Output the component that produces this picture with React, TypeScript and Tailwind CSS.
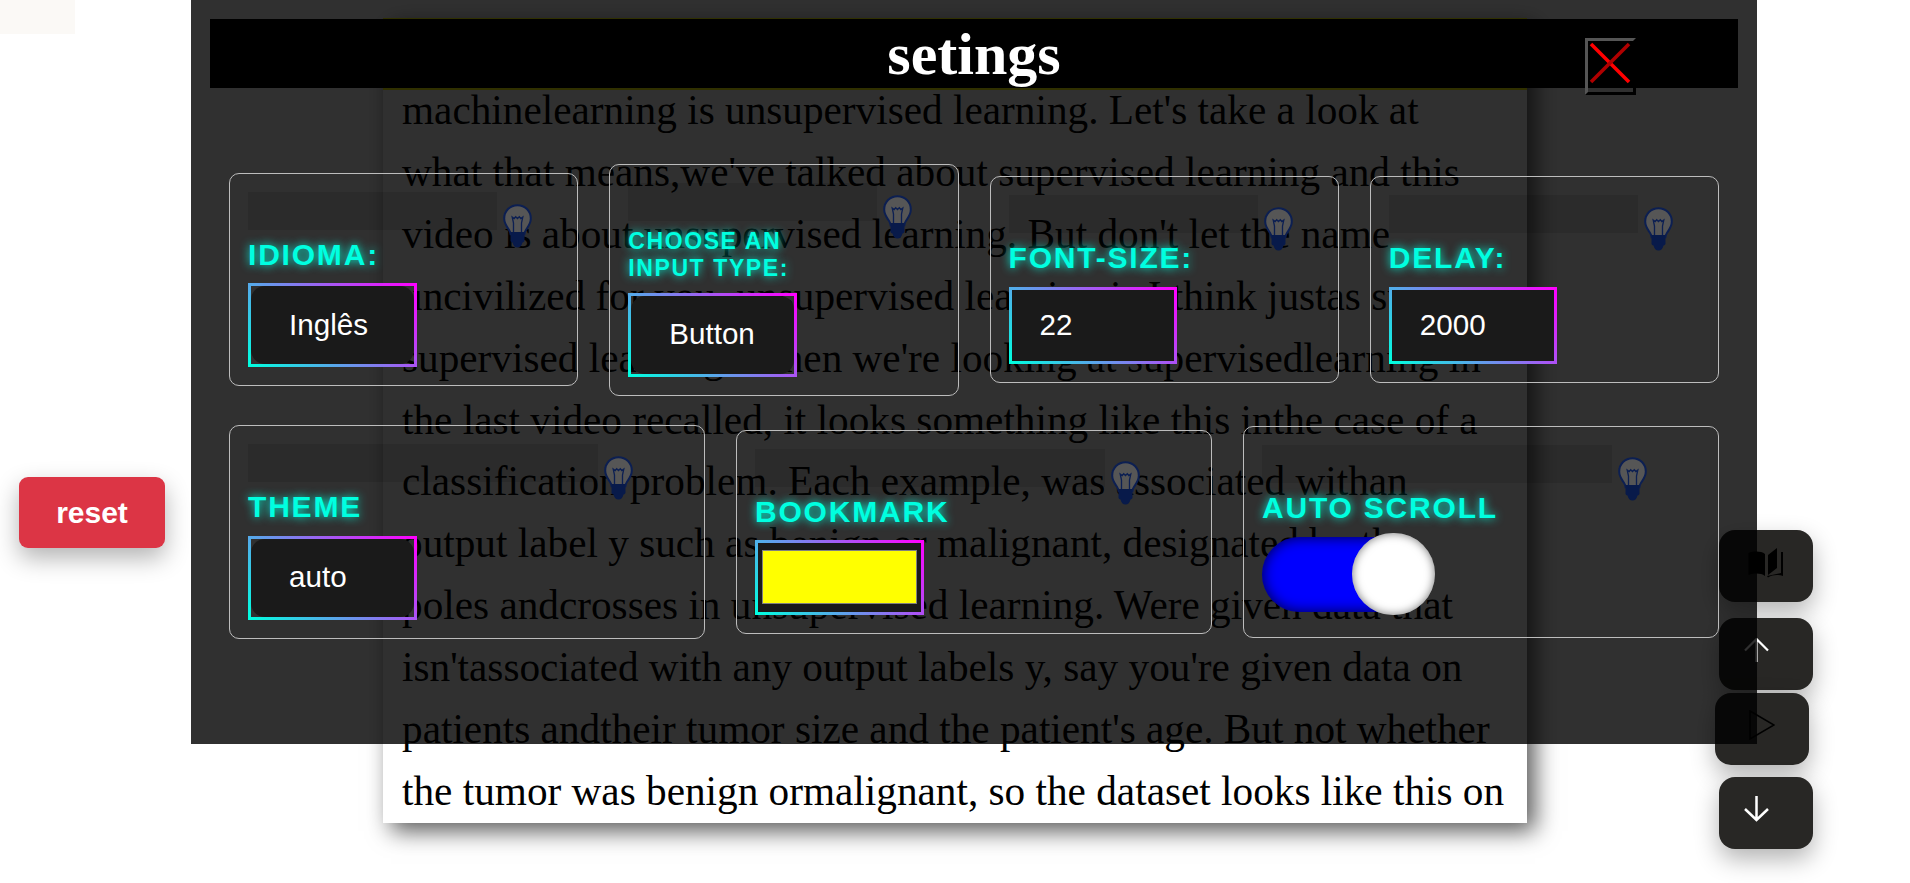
import React from "react";

const lines = [
  "machinelearning is unsupervised learning. Let's take a look at",
  "what that means,we've talked about supervised learning and this",
  "video is about unsupervised learning. But don't let the name",
  "uncivilized for you, unsupervised learning is I think justas super as",
  "supervised learning. When we're looking at supervisedlearning in",
  "the last video recalled, it looks something like this inthe case of a",
  "classification problem. Each example, was associated withan",
  "output label y such as benign or malignant, designated by the",
  "poles andcrosses in unsupervised learning. Were given data that",
  "isn'tassociated with any output labels y, say you're given data on",
  "patients andtheir tumor size and the patient's age. But not whether",
  "the tumor was benign ormalignant, so the dataset looks like this on",
];

function Bulb() {
  return (
    <svg viewBox="0 0 29 44" className="w-[29px] h-[44px] shrink-0 mt-[12px]">
      <path d="M14.5 1.2C7 1.2 1.2 7 1.2 14.5c0 5 2.6 8 4.6 11 1.2 1.8 1.7 3.2 1.8 4.8h13.8c.1-1.6.6-3 1.8-4.8 2-3 4.6-6 4.6-11C27.800 7 22 1.200 14.500 1.200Z" fill="#565656" stroke="#0c1f52" strokeWidth="2" />
      <path d="M10.500 30V19l-1.300-6 2 1.500 1.500-1.700 1.800 1.700 1.800-1.700 1.500 1.700 2-1.500-1.300 6v11" fill="none" stroke="#0c1f52" strokeWidth="1.300" />
      <path d="M7.500 28h14v8.500c0 1-.8 1.800-2 2-.6 3-2.500 5-5 5s-4.400-2-5-5c-1.200-.2-2-1-2-2Z" fill="#081a4a" />
    </svg>
  );
}

function Card({ label, small, className, children }: { label: React.ReactNode; small?: boolean; className: string; children: React.ReactNode }) {
  return (
    <div className={`border border-solid border-[#bdbdbd] rounded-[10px] p-[18px] min-w-0 ${className}`}>
      <div className="flex gap-[6px] h-[38px]">
        <div className="w-[80%] h-[38px] bg-black/10" />
        <Bulb />
      </div>
      <div
        className={
          small
            ? "mt-[7px] mb-[11px] w-[200px] font-bold text-[23px] tracking-[1.6px] text-[#00ffe0] [text-shadow:0_0_10px_#00ffe0]"
            : "mt-[8px] mb-[11.5px] font-bold text-[30px] tracking-[1.8px] text-[#00ffe0] [text-shadow:0_0_10px_#00ffe0]"
        }
      >
        {label}
      </div>
      {children}
    </div>
  );
}

function SelectBox({ text }: { text: string }) {
  return (
    <div className="w-[169px] h-[84px] border-[3px] border-solid [border-image:linear-gradient(45deg,#00ffe0,#ff00ff)_1]">
      <div className="w-full h-full rounded-[14px] bg-[#1a1a1a] flex items-center pl-[38px] pb-[1px] text-white text-[29.6px]">{text}</div>
    </div>
  );
}

function InputBox({ text }: { text: string }) {
  return (
    <div className="w-[168px] h-[77px] border-[3px] border-solid [border-image:linear-gradient(45deg,#00ffe0,#ff00ff)_1] bg-[#1a1a1a] flex items-center pl-[28px] pb-[1px] text-white text-[29.6px]">
      {text}
    </div>
  );
}

function Float({ className, children }: { className: string; children: React.ReactNode }) {
  return (
    <div className={`absolute w-[94px] h-[72px] rounded-[16px] bg-[#282725] shadow-[0_10px_25px_rgba(0,0,0,0.3)] flex items-center justify-center pb-[8px] ${className}`}>
      {children}
    </div>
  );
}

export default function App() {
  return (
    <div className="relative w-[1910px] h-[883px] overflow-hidden bg-white font-['Liberation_Sans',sans-serif] leading-[normal]">
      <div className="absolute left-0 top-0 w-[75px] h-[34px] bg-[#fbf9f6]" />

      {/* Paper */}
      <div className="mt-[18px] ml-[383px] w-[1144px] h-[805px] bg-white shadow-[8px_8px_22px_rgba(0,0,0,0.65)] font-['Liberation_Serif',serif] text-black">
        <div className="h-[72px] bg-[#ffff00] -mb-[10px]" />
        <div className="pl-[19px] text-[41.25px] leading-[61.9px] whitespace-nowrap relative">
          {lines.map((l) => (
            <div key={l}>{l}</div>
          ))}
        </div>
      </div>

      {/* Reset */}
      <button className="absolute left-[19px] top-[477px] w-[146px] h-[71px] rounded-[9px] bg-[#dc3545] text-white font-bold text-[30px] shadow-[0_10px_25px_rgba(0,0,0,0.3)]">
        reset
      </button>

      {/* Floating buttons */}
      <Float className="left-[1719px] top-[530px]">
        <svg viewBox="0 0 36 31" className="w-[36px] h-[31px]">
          <path d="M17 7C13 4 6 4 0.500 6v22c5.500-2 12.500-2 16.500 1Z" fill="#000" />
          <path d="M20 8l9-7v20l-9 7Z" fill="#000" />
          <path d="M33 5h2v24c-5-1.500-10-1.500-15 1.500l-1-1.500 14-3Z" fill="#000" />
        </svg>
      </Float>
      <Float className="left-[1719px] top-[618px]">
        <svg viewBox="0 0 25 24" className="w-[25px] h-[24px] -ml-[19px]" fill="none" stroke="#fff" strokeWidth="2.200">
          <path d="M12.500 24V1M1 12.500 12.500 1 24 12.500" />
        </svg>
      </Float>
      <Float className="left-[1715px] top-[693px]">
        <svg viewBox="0 0 26 30" className="w-[26px] h-[30px]" fill="none" stroke="#000" strokeWidth="1.500">
          <path d="M1 1 25 15 1 29Z" />
        </svg>
      </Float>
      <Float className="left-[1719px] top-[777px]">
        <svg viewBox="0 0 25 26" className="w-[25px] h-[26px] -ml-[19px]" fill="none" stroke="#fff" strokeWidth="2.500">
          <path d="M12.500 0V24M1 13 12.500 24 24 13" />
        </svg>
      </Float>

      {/* Settings overlay */}
      <div className="absolute left-[191px] top-0 w-[1566px] h-[744px] bg-black/[0.81] pt-[19px] px-[19px]">
        <div className="relative h-[69px] bg-black flex items-center justify-center">
          <span className="font-['Liberation_Serif',serif] font-bold text-[60px] text-white leading-none">setings</span>
          <button className="absolute left-[1375px] top-[19px] w-[51px] h-[57px] border-[3px] border-solid border-t-[#555] border-l-[#555] border-r-black border-b-black bg-transparent">
            <svg viewBox="0 0 45 51" className="w-[45px] h-[51px]" fill="none" strokeWidth="3.500">
              <path d="M3 3 41 41" stroke="#ff0000" />
              <path d="M41 3 3 41" stroke="#b00000" />
            </svg>
          </button>
        </div>

        <div className="mt-[76px] mx-[19px] h-[231px] flex items-center gap-[31px]">
          <Card label="IDIOMA:" className="flex-1">
            <SelectBox text="Inglês" />
          </Card>
          <Card label={<>CHOOSE AN<br />INPUT TYPE:</>} small className="flex-1">
            <SelectBox text="Button" />
          </Card>
          <Card label="FONT-SIZE:" className="flex-1">
            <InputBox text="22" />
          </Card>
          <Card label="DELAY:" className="flex-1">
            <InputBox text="2000" />
          </Card>
        </div>

        <div className="mt-[30px] mx-[19px] h-[214px] flex items-center gap-[31px]">
          <Card label="THEME" className="flex-1">
            <SelectBox text="auto" />
          </Card>
          <Card label="BOOKMARK" className="flex-1">
            <div className="w-[169px] h-[75px] border-[3px] border-solid [border-image:linear-gradient(45deg,#00ffe0,#ff00ff)_1] bg-[#1a1a1a] pt-[7px] px-[4px]">
              <div className="w-[155px] h-[54px] bg-[#ffff00] border border-solid border-[#808080]" />
            </div>
          </Card>
          <Card label="AUTO SCROLL" className="flex-1">
            <div className="relative w-[173px] h-[82px]">
              <div className="w-[169px] h-[75px] rounded-full bg-[#0000ff] shadow-[inset_0_0_14px_rgba(0,0,0,0.75)]" />
              <div className="absolute left-[90px] -top-[4px] w-[83px] h-[82px] rounded-full bg-white shadow-[inset_0_0_10px_rgba(0,0,0,0.55)]" />
            </div>
          </Card>
        </div>
      </div>
    </div>
  );
}
